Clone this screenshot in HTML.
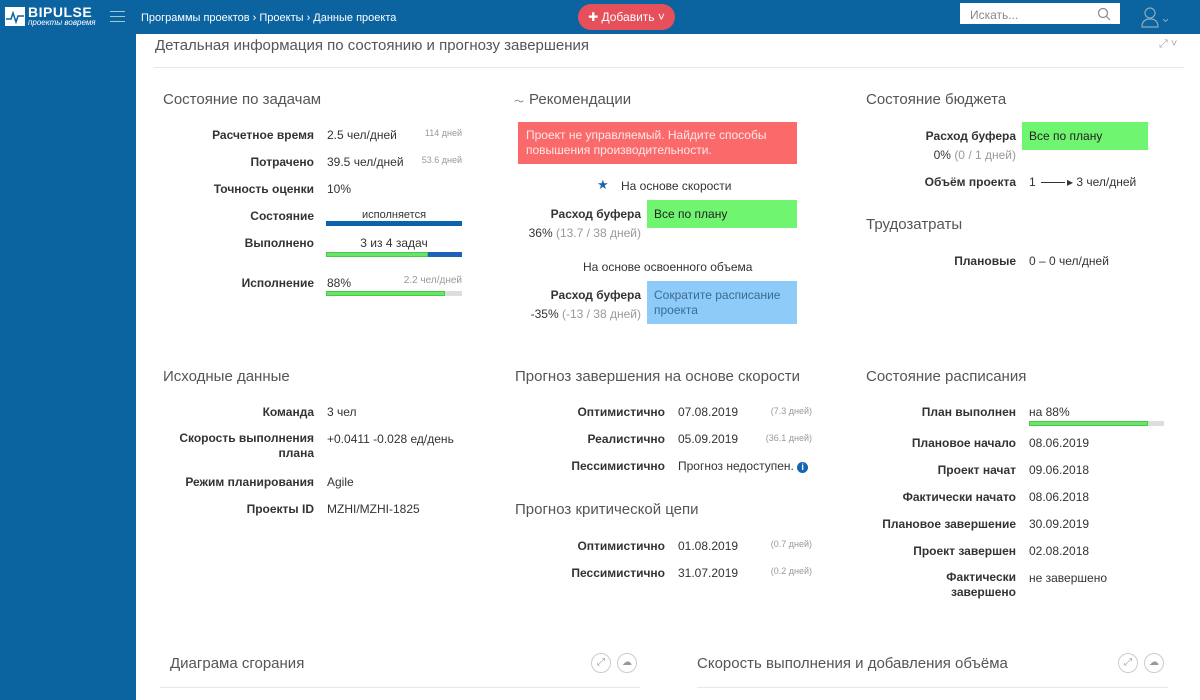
<!DOCTYPE html>
<html><head><meta charset="utf-8"><style>
*{margin:0;padding:0;box-sizing:border-box}
body{width:1200px;height:700px;overflow:hidden;background:#fff;font-family:"Liberation Sans","DejaVu Sans",sans-serif;color:#333;position:relative}
.a{position:absolute;white-space:nowrap}
.hdr{position:absolute;left:0;top:0;width:1200px;height:34px;background:#0b63a0}
.side{position:absolute;left:0;top:34px;width:136px;height:666px;background:#0b63a0}
.t{font-size:15px;color:#555;line-height:18px}
.l{font-size:12px;font-weight:bold;color:#333;line-height:16px;text-align:right}
.v{font-size:12px;color:#333;line-height:16px}
.n{font-size:9px;color:#999;line-height:12px;text-align:right}
.g{color:#999}
.bar{position:absolute;height:5px}
.circ{position:absolute;width:20px;height:20px;border:1px solid #ccc;border-radius:50%;font-size:10px;color:#999;text-align:center;line-height:18px}
</style></head><body>
<div class="hdr"></div>
<div class="side"></div>
<div class="a" style="left:5px;top:7px;width:20px;height:19px;background:#fff"></div>
<svg class="a" style="left:5px;top:7px" width="20" height="19"><polyline points="1,12 6,12 8,6 11,15 13,9 19,9" fill="none" stroke="#0b63a0" stroke-width="1.5"/></svg>
<div class="a" style="left:28px;top:4px;font-size:14px;font-weight:bold;color:#fff;letter-spacing:0.5px;line-height:16px">BIPULSE</div>
<div class="a" style="left:28px;top:18px;font-size:8px;font-style:italic;color:#fff;line-height:9px">проекты вовремя</div>
<div class="a" style="left:110px;top:11px;width:15px;height:1px;background:#9cc;box-shadow:0 5px 0 #9cc,0 10px 0 #9cc"></div>
<div class="a" style="left:141px;top:11px;font-size:11px;color:#fff;line-height:14px">Программы проектов › Проекты › Данные проекта</div>
<div class="a" style="left:578px;top:4px;width:97px;height:26px;background:#e5505a;border-radius:13px;color:#fff;font-size:12px;line-height:26px;text-align:center">✚ Добавить ˅</div>
<div class="a" style="left:960px;top:3px;width:160px;height:21px;background:#fff"></div>
<div class="a" style="left:970px;top:8px;font-size:12px;color:#888">Искать...</div>
<svg class="a" style="left:1097px;top:7px" width="14" height="14"><circle cx="6" cy="6" r="4.5" fill="none" stroke="#888" stroke-width="1.2"/><line x1="9.5" y1="9.5" x2="13" y2="13" stroke="#888" stroke-width="1.2"/></svg>
<svg class="a" style="left:1140px;top:6px" width="32" height="22"><circle cx="10" cy="7" r="5" fill="none" stroke="#8ab" stroke-width="1.2"/><path d="M2 21 Q2 13 10 13 Q18 13 18 21 Z" fill="none" stroke="#8ab" stroke-width="1.2"/><polyline points="23,13 25.5,15.5 28,13" fill="none" stroke="#8ab"/></svg>

<div class="a t" style="left:155px;top:37px;font-size:15px;color:#555">Детальная информация по состоянию и прогнозу завершения</div>
<div class="a" style="left:1159px;top:38px;font-size:11px;color:#aaa">⤢ ˅</div>
<div class="a" style="left:154px;top:67px;width:1030px;height:1px;background:#e8e8e8"></div>

<div class="a t" style="left:163px;top:91px">Состояние по задачам</div>
<div class="a l" style="right:886px;top:127px">Расчетное время</div><div class="a v" style="left:327px;top:127px">2.5 чел/дней</div><div class="a n" style="right:738px;top:127px">114 дней</div>
<div class="a l" style="right:886px;top:154px">Потрачено</div><div class="a v" style="left:327px;top:154px">39.5 чел/дней</div><div class="a n" style="right:738px;top:154px">53.6 дней</div>
<div class="a l" style="right:886px;top:181px">Точность оценки</div><div class="a v" style="left:327px;top:181px">10%</div>
<div class="a l" style="right:886px;top:208px">Состояние</div><div class="a v" style="left:326px;width:136px;top:207px;text-align:center;font-size:11px">исполняется</div>
<div class="bar" style="left:326px;top:221px;width:136px;background:#0b63b0"></div>
<div class="a l" style="right:886px;top:235px">Выполнено</div><div class="a v" style="left:326px;width:136px;top:235px;text-align:center">3 из 4 задач</div>
<div class="bar" style="left:326px;top:252px;width:136px;background:#1b62b8"></div><div class="bar" style="left:326px;top:252px;width:102px;background:#6de36d;border:1px solid #4c4"></div>
<div class="a l" style="right:886px;top:275px">Исполнение</div><div class="a v" style="left:327px;top:275px">88%</div><div class="a n" style="right:738px;top:275px;font-size:10px">2.2 чел/дней</div>
<div class="bar" style="left:326px;top:291px;width:136px;background:#ddd"></div><div class="bar" style="left:326px;top:291px;width:119px;background:#6de36d;border:1px solid #4c4"></div>

<div class="a t" style="left:163px;top:368px">Исходные данные</div>
<div class="a l" style="right:886px;top:404px">Команда</div><div class="a v" style="left:327px;top:404px">3 чел</div>
<div class="a l" style="right:886px;top:431px;line-height:15px">Скорость выполнения<br>плана</div><div class="a v" style="left:327px;top:431px">+0.0411 -0.028 ед/день</div>
<div class="a l" style="right:886px;top:474px">Режим планирования</div><div class="a v" style="left:327px;top:474px">Agile</div>
<div class="a l" style="right:886px;top:501px">Проекты ID</div><div class="a v" style="left:327px;top:501px">MZHI/MZHI-1825</div>

<div class="a" style="left:514px;top:93px;font-size:10px;color:#777">〜</div>
<div class="a t" style="left:529px;top:91px">Рекомендации</div>
<div class="a" style="left:518px;top:122px;width:279px;height:42px;background:#fb6a6a;color:#fde8e8;font-size:12px;line-height:15px;padding:6px 8px;white-space:normal">Проект не управляемый. Найдите способы повышения производительности.</div>
<div class="a" style="left:597px;top:177px;font-size:13px;color:#1565b0">★</div>
<div class="a v" style="left:621px;top:178px">На основе скорости</div>
<div class="a l" style="right:559px;top:206px">Расход буфера</div>
<div class="a v" style="right:559px;top:225px">36% <span class="g">(13.7 / 38 дней)</span></div>
<div class="a" style="left:647px;top:200px;width:150px;height:28px;background:#6ff56f;font-size:12px;line-height:28px;padding-left:7px;color:#222">Все по плану</div>
<div class="a v" style="left:583px;top:259px">На основе освоенного объема</div>
<div class="a l" style="right:559px;top:287px">Расход буфера</div>
<div class="a v" style="right:559px;top:306px">-35% <span class="g">(-13 / 38 дней)</span></div>
<div class="a" style="left:647px;top:281px;width:150px;height:43px;background:#8ecbf8;font-size:12px;line-height:15px;padding:7px 7px;color:#3a6c92;white-space:normal">Сократите расписание проекта</div>

<div class="a t" style="left:515px;top:368px">Прогноз завершения на основе скорости</div>
<div class="a l" style="right:535px;top:404px">Оптимистично</div><div class="a v" style="left:678px;top:404px">07.08.2019</div><div class="a n" style="right:388px;top:405px">(7.3 дней)</div>
<div class="a l" style="right:535px;top:431px">Реалистично</div><div class="a v" style="left:678px;top:431px">05.09.2019</div><div class="a n" style="right:388px;top:432px">(36.1 дней)</div>
<div class="a l" style="right:535px;top:458px">Пессимистично</div><div class="a v" style="left:678px;top:458px">Прогноз недоступен. <span style="display:inline-block;width:11px;height:11px;border-radius:50%;background:#1565b0;color:#fff;font-size:9px;line-height:11px;text-align:center;font-weight:bold">i</span></div>
<div class="a t" style="left:515px;top:501px">Прогноз критической цепи</div>
<div class="a l" style="right:535px;top:538px">Оптимистично</div><div class="a v" style="left:678px;top:538px">01.08.2019</div><div class="a n" style="right:388px;top:538px">(0.7 дней)</div>
<div class="a l" style="right:535px;top:565px">Пессимистично</div><div class="a v" style="left:678px;top:565px">31.07.2019</div><div class="a n" style="right:388px;top:565px">(0.2 дней)</div>

<div class="a t" style="left:866px;top:91px">Состояние бюджета</div>
<div class="a l" style="right:184px;top:128px">Расход буфера</div>
<div class="a v" style="right:184px;top:147px">0% <span class="g">(0 / 1 дней)</span></div>
<div class="a" style="left:1022px;top:122px;width:126px;height:28px;background:#6ff56f;font-size:12px;line-height:28px;padding-left:7px;color:#222">Все по плану</div>
<div class="a l" style="right:184px;top:174px">Объём проекта</div><div class="a v" style="left:1029px;top:174px">1 <span style="display:inline-block;width:24px;height:1px;background:#333;vertical-align:middle;margin:0 2px"></span>▸ 3 чел/дней</div>
<div class="a t" style="left:866px;top:216px">Трудозатраты</div>
<div class="a l" style="right:184px;top:253px">Плановые</div><div class="a v" style="left:1029px;top:253px">0 – 0 чел/дней</div>

<div class="a t" style="left:866px;top:368px">Состояние расписания</div>
<div class="a l" style="right:184px;top:404px">План выполнен</div><div class="a v" style="left:1029px;top:404px">на 88%</div>
<div class="bar" style="left:1029px;top:421px;width:135px;background:#ddd"></div><div class="bar" style="left:1029px;top:421px;width:119px;background:#6de36d;border:1px solid #4c4"></div>
<div class="a l" style="right:184px;top:435px">Плановое начало</div><div class="a v" style="left:1029px;top:435px">08.06.2019</div>
<div class="a l" style="right:184px;top:462px">Проект начат</div><div class="a v" style="left:1029px;top:462px">09.06.2018</div>
<div class="a l" style="right:184px;top:489px">Фактически начато</div><div class="a v" style="left:1029px;top:489px">08.06.2018</div>
<div class="a l" style="right:184px;top:516px">Плановое завершение</div><div class="a v" style="left:1029px;top:516px">30.09.2019</div>
<div class="a l" style="right:184px;top:543px">Проект завершен</div><div class="a v" style="left:1029px;top:543px">02.08.2018</div>
<div class="a l" style="right:184px;top:570px;line-height:15px">Фактически<br>завершено</div><div class="a v" style="left:1029px;top:570px">не завершено</div>

<div class="a t" style="left:170px;top:655px">Диаграма сгорания</div>
<div class="circ" style="left:591px;top:653px">⤢</div><div class="circ" style="left:617px;top:653px">☁</div>
<div class="a" style="left:160px;top:687px;width:480px;height:1px;background:#e8e8e8"></div>
<div class="a t" style="left:697px;top:655px">Скорость выполнения и добавления объёма</div>
<div class="circ" style="left:1118px;top:653px">⤢</div><div class="circ" style="left:1144px;top:653px">☁</div>
<div class="a" style="left:697px;top:687px;width:471px;height:1px;background:#e8e8e8"></div>
</body></html>
